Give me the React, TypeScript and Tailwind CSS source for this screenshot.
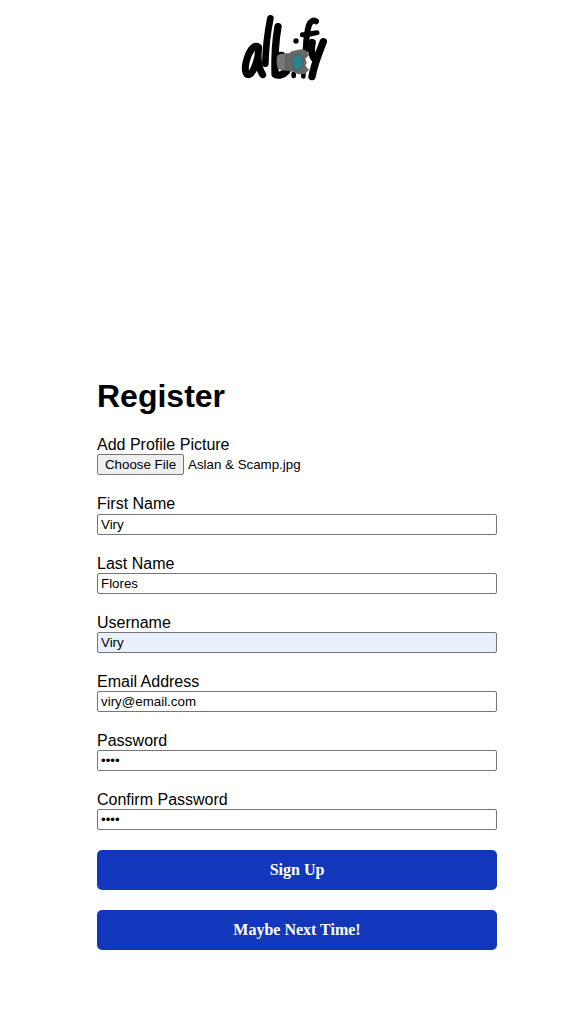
import React from "react";

function Logo() {
  return (
    <svg className="h-[85px] w-[110px]" viewBox="0 0 330 255" fill="none" role="img" aria-label="albify">
      <g stroke="#000" strokeLinecap="round" strokeLinejoin="round">
        <path strokeWidth="21" d="M82 124C70 120 55 142 49 168C43 192 46 209 56 209C67 208 77 182 83 158" />
        <path strokeWidth="21" d="M86 128C82 158 86 190 98 209" />
        <path strokeWidth="20" d="M121 40C114 75 107 130 106 176" />
        <path strokeWidth="22" d="M144 65C137 105 134 161 135 203" />
        <path strokeWidth="22" d="M136 208C144 213 160 210 170 199M141 160Q147 151 155 151" />
        <path strokeWidth="14" d="M191 207V213M221 188L220 214" />
        <path strokeWidth="18" d="M258 49C251 43 241 49 237 60C231 76 229 98 227 134" />
        <path strokeWidth="15" d="M217 89C230 90 245 86 261 83" />
        <path strokeWidth="21" d="M247 112C243 133 245 152 253 161" />
        <path strokeWidth="22" d="M280 110C270 136 253 176 246 215" />
      </g>
      <circle cx="198" cy="108" r="8" fill="#000" />
      <path d="M142 151Q155 143 177 145L187 138L213 133Q225 132 230 139L237 151L226 161L230 173L226 182L237 195L224 207L205 208L190 201L175 197Q153 198 143 190Q137 171 142 151Z" fill="#686868" />
      <path d="M144 151Q154 146 168 148L164 195Q153 196 144 189Q139 170 144 151Z" fill="#777" />
      <path d="M170 147Q164 171 170 196" stroke="#585858" strokeWidth="3" />
      <ellipse cx="203" cy="172" rx="19" ry="26" fill="#566163" transform="rotate(8 203 172)" />
      <ellipse cx="203" cy="172" rx="15" ry="22" fill="#29828c" transform="rotate(8 203 172)" />
    </svg>
  );
}

type FieldProps = { id: string; label: string; value: string; type?: string; filled?: boolean; labelLeading?: string };

function Field({ id, label, value, type = "text", filled = false, labelLeading = "leading-[22px]" }: FieldProps) {
  return (
    <div className="flex flex-col">
      <label htmlFor={id} className={`h-5 text-base ${labelLeading}`}>{label}</label>
      <input
        id={id}
        type={type}
        defaultValue={value}
        className={`h-[21px] w-full rounded-[2px] border border-[#767676] px-[3px] py-0 text-[13.333px] leading-[15px] text-black outline-none ${filled ? "bg-[#e8f0fe]" : "bg-white"}`}
      />
    </div>
  );
}

function Action({ children, type }: { children: React.ReactNode; type: "submit" | "button" }) {
  return (
    <button type={type} className="h-10 w-full rounded-[5px] bg-[#1237bd] font-['Liberation_Serif',serif] text-base leading-5 font-bold text-white">
      {children}
    </button>
  );
}

export default function App() {
  return (
    <main className="flex min-h-[1020px] w-full flex-col bg-white font-['Liberation_Sans',Arial,sans-serif] text-black">
      <header className="flex h-[377px] shrink-0 items-start pt-[5px] pl-[230px]">
        <Logo />
      </header>
      <form className="ml-[97px] flex w-[400px] flex-col" onSubmit={(e) => e.preventDefault()}>
        <h1 className="h-[57px] text-[32px] leading-[39px] font-bold">Register</h1>
        <div className="mb-[19px] flex flex-col">
          <span className="h-5 text-base leading-[22px]">Add Profile Picture</span>
          <div className="flex h-[21px] items-center gap-1 text-[13.333px] leading-[15px]">
            <button type="button" className="h-[21px] w-[87px] rounded-[2px] border border-[#767676] bg-[#efefef] whitespace-nowrap">Choose File</button>
            <span>Aslan &amp; Scamp.jpg</span>
          </div>
        </div>
        <div className="flex flex-col gap-[18px]">
          <Field id="first" label="First Name" value="Viry" labelLeading="leading-5" />
          <Field id="last" label="Last Name" value="Flores" />
          <Field id="username" label="Username" value="Viry" filled />
          <Field id="email" label="Email Address" value="viry@email.com" />
          <Field id="password" label="Password" value="1234" type="password" />
          <Field id="confirm" label="Confirm Password" value="1234" type="password" />
        </div>
        <div className="mt-5 flex flex-col gap-5">
          <Action type="submit">Sign Up</Action>
          <Action type="button">Maybe Next Time!</Action>
        </div>
      </form>
    </main>
  );
}
